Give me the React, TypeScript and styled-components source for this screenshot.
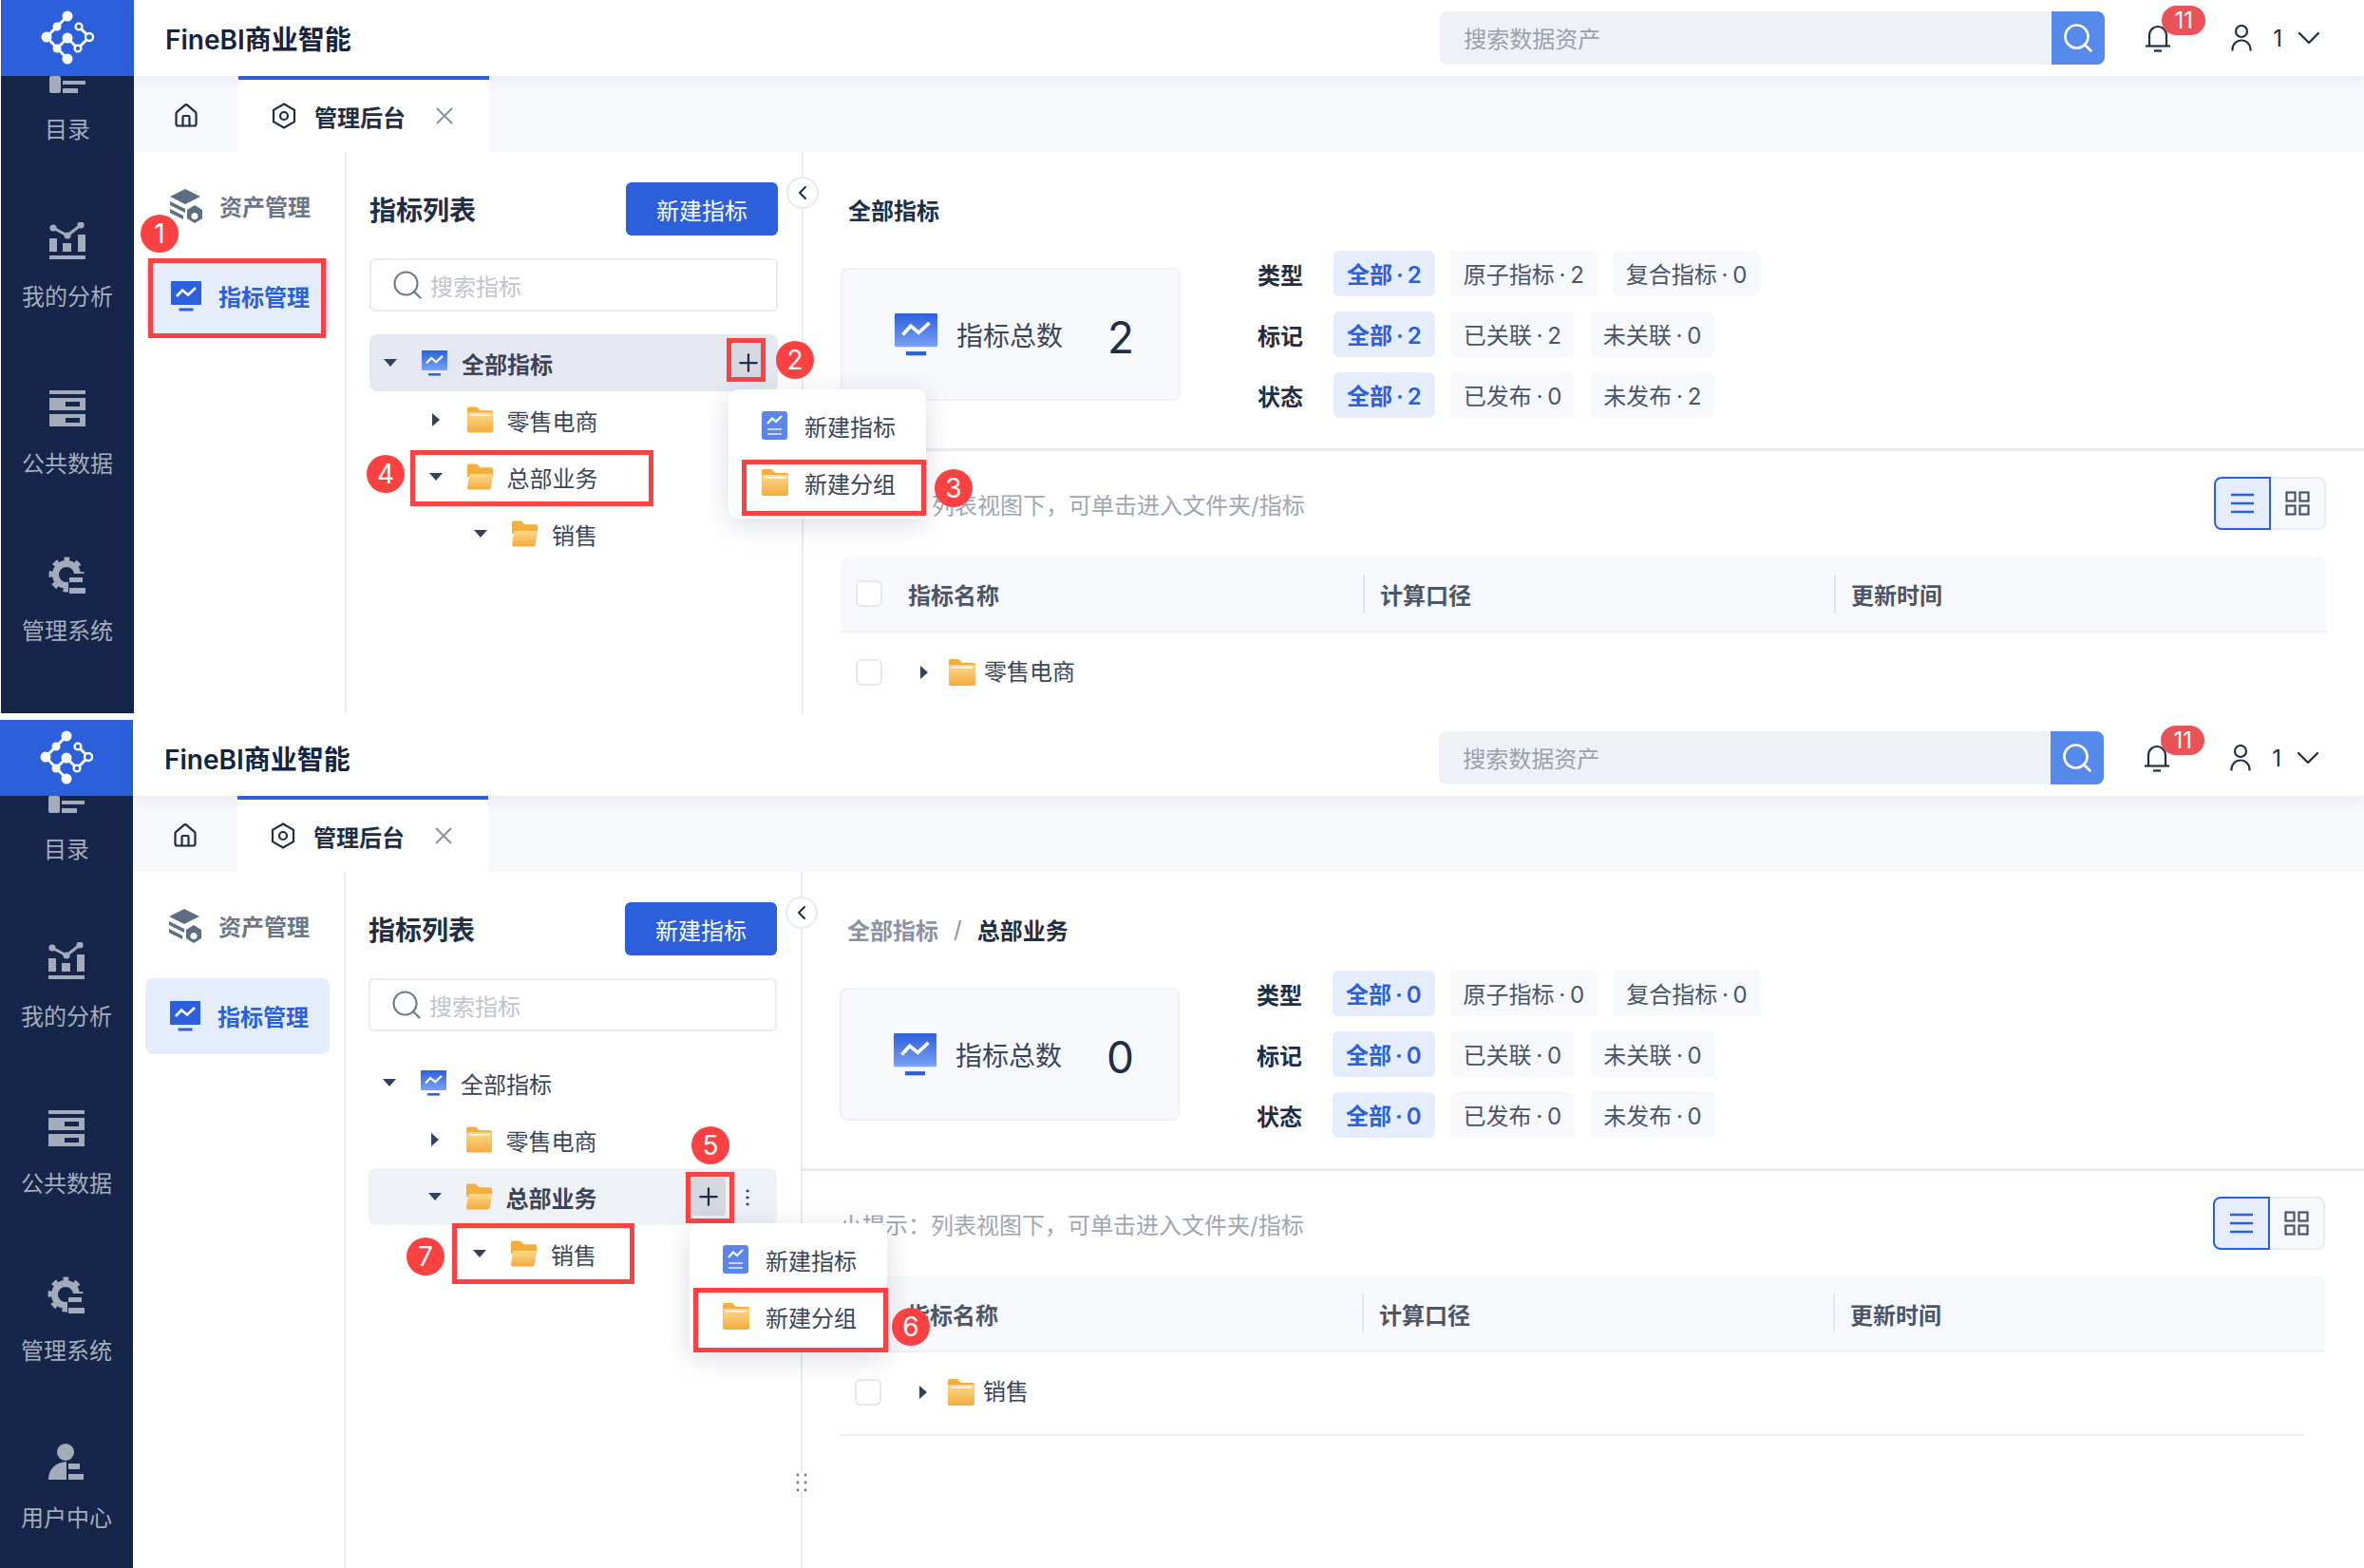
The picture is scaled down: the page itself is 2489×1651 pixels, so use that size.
import React from 'react';
import styled, { createGlobalStyle } from 'styled-components';
import { ChevronDown, ChevronLeft, House, Plus, Search, X } from 'lucide-react';

const GlobalStyle = createGlobalStyle`
    html, body {
        margin: 0;
        padding: 0;
        background: #ffffff;
        overflow-x: hidden;
    }
    body {
        font-family: "Inter", "Noto Sans CJK SC", sans-serif;
        color: #3a4559;
    }
    * {
        box-sizing: border-box;
    }
`;

type Count = { label: string; value: number };

interface NavEntry {
    label: string;
    icon: React.ReactNode;
}

interface Spot {
    x: number;
    y: number;
    w?: number;
    h?: number;
    n?: number;
}

interface FrameProps {
    height: number;
    shift?: boolean;
    allSelected?: boolean;
    crumb?: string;
    total: number;
    types: Count[];
    marks: Count[];
    states: Count[];
    rowName: string;
    popup: { x: number; y: number };
    boxes: Spot[];
    numbers: Spot[];
}

// icons
const LogoMark = () => (
    <svg width="60" height="60" viewBox="40 10 60 60" fill="none">
        <g stroke="#fff" strokeWidth="3">
            <path d="M70 17 48 39 70 62" />
            <path d="M59 51 70 40 81 51 93 39 82 28" />
        </g>
        <g fill="#fff">
            <circle cx="70" cy="17" r="5.5" />
            <circle cx="59" cy="28" r="4.5" />
            <circle cx="48" cy="39" r="5.5" />
            <circle cx="70" cy="40" r="5.5" />
            <circle cx="59" cy="51" r="4.5" />
            <circle cx="70" cy="62" r="5.5" />
        </g>
        <g fill="#2c5fdc" stroke="#fff" strokeWidth="2.4">
            <circle cx="82" cy="28" r="3.4" />
            <circle cx="93" cy="39" r="4" />
            <circle cx="81" cy="51" r="3.4" />
        </g>
    </svg>
);

const CatalogIcon = () => (
    <svg width="40" height="40" viewBox="0 0 40 40" fill="#a4acbc">
        <rect x="1" y="1" width="38" height="6" />
        <rect x="1" y="22" width="12" height="18" rx="2" />
        <rect x="15" y="27" width="24" height="4" />
        <rect x="15" y="35" width="16" height="5" />
    </svg>
);

const AnalysisIcon = () => (
    <svg width="40" height="40" viewBox="0 0 40 40" fill="#a4acbc">
        <rect x="1" y="35" width="38" height="4" />
        <rect x="1" y="17" width="8" height="14" />
        <rect x="15" y="22" width="9" height="9" />
        <rect x="31" y="13" width="8" height="18" />
        <path d="M5 6 20 14 34 3" fill="none" stroke="#a4acbc" strokeWidth="3" />
        <circle cx="5" cy="6" r="3.6" />
        <circle cx="20" cy="14" r="3.6" />
        <circle cx="34" cy="3" r="3.6" />
    </svg>
);

const DataIcon = () => (
    <svg width="40" height="40" viewBox="0 0 40 40" fill="#a4acbc">
        <rect x="1" y="1" width="38" height="4" />
        <path fillRule="evenodd" d="M1 9h38v13H1zM18 13v5h15v-5z" />
        <path fillRule="evenodd" d="M1 26h38v13H1zM18 30v5h15v-5z" />
    </svg>
);

const SettingIcon = () => (
    <svg width="40" height="40" viewBox="0 0 40 40" fill="none">
        <circle cx="19" cy="19" r="11.5" stroke="#a4acbc" strokeWidth="7" />
        <circle cx="19" cy="19" r="16.5" stroke="#a4acbc" strokeWidth="4" strokeDasharray="6.48 6.48" strokeDashoffset="3.24" transform="rotate(-90 19 19)" />
        <path d="M21 40V21h4v-3h15v22z" fill="#16264a" />
        <rect x="22" y="22" width="14" height="5" fill="#a4acbc" />
        <rect x="22" y="33" width="17" height="6" fill="#a4acbc" />
    </svg>
);

const PersonIcon = () => (
    <svg width="40" height="40" viewBox="0 0 40 40" fill="#a4acbc">
        <circle cx="19" cy="9" r="9" />
        <path d="M1 38c0-11 7-18 19-19v19z" />
        <rect x="22" y="21" width="12" height="6" />
        <rect x="22" y="32" width="16" height="6" />
    </svg>
);

const HexIcon = () => (
    <svg width="26" height="28" viewBox="0 0 26 28" fill="none" stroke="#1f2d45" strokeWidth="2.2">
        <path d="M13 1.5 24 7.8v12.4L13 26.5 2 20.2V7.8z" />
        <circle cx="13" cy="14" r="4" />
    </svg>
);

const AssetIcon = () => (
    <svg width="36" height="36" viewBox="0 0 36 36" fill="#5f6d82">
        <path d="M17 0 33 8 17 16 1 8z" />
        <path d="M1 13 17 21v4L1 17zM1 21l14 7v4L1 25z" />
        <path fillRule="evenodd" d="M27 17l8 5v9l-8 5-8-5v-9zm0 8a3.6 3.6 0 1 0 .01 0z" />
    </svg>
);

const MonitorIcon = ({ size = 32, flat = false }: { size?: number; flat?: boolean }) => (
    <svg width={size} height={size} viewBox="0 0 32 32">
        <defs>
            <linearGradient id="monitorFill" x1="0" y1="0" x2="0" y2="1">
                <stop offset="0" stopColor="#2c5fdc" />
                <stop offset="1" stopColor="#7ba2f5" />
            </linearGradient>
        </defs>
        <rect width="32" height="25" rx="1" fill={flat ? '#2c5fdc' : 'url(#monitorFill)'} />
        <path d="M6 16 12 9.5 18 14.5 26 7" fill="none" stroke="#fff" strokeWidth="2.6" />
        <rect x="8.5" y="28.5" width="15" height="3" fill="#2c5fdc" />
    </svg>
);

const DocIcon = () => (
    <svg width="27" height="30" viewBox="0 0 27 30">
        <rect width="27" height="30" rx="3" fill="#5b85e8" />
        <path d="M6 13 11 7.5 15 11 21 5" fill="none" stroke="#fff" strokeWidth="2.2" />
        <rect x="6" y="18" width="15" height="2" fill="#c7d6f8" />
        <rect x="6" y="23" width="15" height="2" fill="#c7d6f8" />
    </svg>
);

const FolderDefs = () => (
    <svg width="0" height="0" style={{ position: 'absolute' }}>
        <defs>
            <linearGradient id="folderFill" x1="0" y1="0" x2="0" y2="1">
                <stop offset="0" stopColor="#fdd98c" />
                <stop offset="1" stopColor="#f3aa3e" />
            </linearGradient>
        </defs>
    </svg>
);

const FolderIcon = ({ open = false }: { open?: boolean }) => (
    <svg width="28" height="28" viewBox="0 0 28 28">
        <path d="M2 0h8l4 4h12a2 2 0 0 1 2 2v8H0V2a2 2 0 0 1 2-2z" fill="#f5ad3c" />
        {open ? (
            <path d="M4 11h23a1 1 0 0 1 1 1l-2.4 14a2 2 0 0 1-2 2H2a2 2 0 0 1-2-2l2-13a2 2 0 0 1 2-2z" fill="url(#folderFill)" />
        ) : (
            <>
                <rect y="6" width="28" height="22" rx="2" fill="url(#folderFill)" />
                <rect x="3" y="8" width="22" height="1.4" fill="#fff" />
            </>
        )}
    </svg>
);

const Triangle = ({ open }: { open: boolean }) => (
    <svg width="16" height="16" viewBox="0 0 16 16" fill="#33415c">
        {open ? <path d="M1 4h14L8 12z" /> : <path d="M4 1v14l8-7z" />}
    </svg>
);

const BellIcon = () => (
    <svg width="28" height="30" viewBox="0 0 28 30" fill="none" stroke="#1f2d45" strokeWidth="2.2">
        <path d="M5 23V12a9 9 0 0 1 18 0v11" />
        <path d="M1 23.5h26" />
        <path d="M10 28.5h8" />
    </svg>
);

const UserIcon = () => (
    <svg width="24" height="28" viewBox="0 0 24 28" fill="none" stroke="#1f2d45" strokeWidth="2.2">
        <circle cx="12" cy="7" r="6" />
        <path d="M2.5 27.5V26a9.5 9.5 0 0 1 19 0v1.5" />
    </svg>
);

const ListIcon = () => (
    <svg width="26" height="24" viewBox="0 0 26 24" stroke="#2c5fdc" strokeWidth="2.4">
        <path d="M1 3h24M1 12h24M1 21h24" />
    </svg>
);

const GridIcon = () => (
    <svg width="26" height="26" viewBox="0 0 26 26" fill="none" stroke="#4a5468" strokeWidth="2.2">
        <rect x="1.5" y="1.5" width="9" height="9" />
        <rect x="15.5" y="1.5" width="9" height="9" />
        <rect x="1.5" y="15.5" width="9" height="9" />
        <rect x="15.5" y="15.5" width="9" height="9" />
    </svg>
);

const DragDots = () => (
    <svg width="12" height="20" viewBox="0 0 12 20" fill="#6b7688">
        {[2, 10, 18].map((y) => (
            <React.Fragment key={y}>
                <circle cx="2" cy={y} r="1.4" />
                <circle cx="10" cy={y} r="1.4" />
            </React.Fragment>
        ))}
    </svg>
);

const navItems: NavEntry[] = [
    { label: '目录', icon: <CatalogIcon /> },
    { label: '我的分析', icon: <AnalysisIcon /> },
    { label: '公共数据', icon: <DataIcon /> },
    { label: '管理系统', icon: <SettingIcon /> },
    { label: '用户中心', icon: <PersonIcon /> },
];

function FilterLine({ title, items }: { title: string; items: Count[] }) {
    return (
        <FilterRow>
            <FilterTitle>{title}</FilterTitle>
            {items.map((item, i) => (
                <Chip key={item.label} $active={i === 0}>
                    {item.label} · {item.value}
                </Chip>
            ))}
        </FilterRow>
    );
}

function ScreenFrame(props: FrameProps) {
    const { allSelected, crumb, total, types, marks, states, rowName, popup, boxes, numbers } = props;

    return (
        <Frame $height={props.height} $shift={props.shift}>
            <SideBar>
                <LogoBox>
                    <LogoMark />
                </LogoBox>
                <NavList>
                    {navItems.map((item) => (
                        <NavItem key={item.label}>
                            {item.icon}
                            <span>{item.label}</span>
                        </NavItem>
                    ))}
                </NavList>
            </SideBar>

            <MainArea>
                <TopBar>
                    <AppTitle>FineBI商业智能</AppTitle>
                    <SearchBox>
                        <SearchText>搜索数据资产</SearchText>
                        <SearchBtn>
                            <Search size={36} strokeWidth={1.8} />
                        </SearchBtn>
                    </SearchBox>
                    <BellBox>
                        <BellIcon />
                        <BellCount>11</BellCount>
                    </BellBox>
                    <UserBox>
                        <UserIcon />
                        <span>1</span>
                        <ChevronDown size={40} strokeWidth={1.4} color="#1f2d45" />
                    </UserBox>
                </TopBar>

                <TabBar>
                    <HomeTab>
                        <House size={28} strokeWidth={1.9} color="#1f2d45" />
                    </HomeTab>
                    <ActiveTab>
                        <HexIcon />
                        <TabLabel>管理后台</TabLabel>
                        <X size={30} strokeWidth={1.6} color="#8a93a3" />
                    </ActiveTab>
                </TabBar>

                <Body>
                    <MenuColumn>
                        <MenuItem>
                            <AssetIcon />
                            <span>资产管理</span>
                        </MenuItem>
                        <MenuItem $active>
                            <MonitorIcon flat />
                            <span>指标管理</span>
                        </MenuItem>
                    </MenuColumn>

                    <TreeColumn>
                        <TreeHead>
                            <TreeTitle>指标列表</TreeTitle>
                            <PrimaryBtn>新建指标</PrimaryBtn>
                        </TreeHead>
                        <TreeSearch>
                            <Search size={36} strokeWidth={1.4} color="#6b7688" />
                            <span>搜索指标</span>
                        </TreeSearch>
                        <TreeList>
                            <TreeRow $level={0} $tone={allSelected ? 'strong' : undefined}>
                                <Triangle open />
                                <TreeIcon><MonitorIcon size={27} /></TreeIcon>
                                <TreeText $bold={allSelected}>全部指标</TreeText>
                                {allSelected && <PlusBtn><Plus size={30} strokeWidth={1.8} color="#1f2d45" /></PlusBtn>}
                            </TreeRow>
                            <TreeRow $level={1}>
                                <Triangle open={false} />
                                <TreeIcon><FolderIcon /></TreeIcon>
                                <TreeText>零售电商</TreeText>
                            </TreeRow>
                            <TreeRow $level={1} $tone={allSelected ? undefined : 'soft'}>
                                <Triangle open />
                                <TreeIcon><FolderIcon open /></TreeIcon>
                                <TreeText $bold={!allSelected}>总部业务</TreeText>
                                {!allSelected && (
                                    <>
                                        <PlusBtn><Plus size={30} strokeWidth={1.8} color="#1f2d45" /></PlusBtn>
                                        <Kebab>⋮</Kebab>
                                    </>
                                )}
                            </TreeRow>
                            <TreeRow $level={2}>
                                <Triangle open />
                                <TreeIcon><FolderIcon open /></TreeIcon>
                                <TreeText>销售</TreeText>
                            </TreeRow>
                        </TreeList>
                        <CollapseBtn>
                            <ChevronLeft size={24} strokeWidth={2} color="#1f2d45" />
                        </CollapseBtn>
                        <DragHandle>
                            <DragDots />
                        </DragHandle>
                    </TreeColumn>

                    <DetailColumn>
                        <Summary>
                            <Crumbs>
                                {crumb ? (
                                    <>
                                        <CrumbParent>全部指标</CrumbParent>
                                        <CrumbSlash>/</CrumbSlash>
                                        <span>{crumb}</span>
                                    </>
                                ) : (
                                    <span>全部指标</span>
                                )}
                            </Crumbs>
                            <SummaryRow>
                                <StatCard>
                                    <MonitorIcon size={45} />
                                    <StatLabel>指标总数</StatLabel>
                                    <StatValue>{total}</StatValue>
                                </StatCard>
                                <Filters>
                                    <FilterLine title="类型" items={types} />
                                    <FilterLine title="标记" items={marks} />
                                    <FilterLine title="状态" items={states} />
                                </Filters>
                            </SummaryRow>
                        </Summary>

                        <ListArea>
                            <HintRow>
                                <HintText>小提示：列表视图下，可单击进入文件夹/指标</HintText>
                                <ViewSwitch>
                                    <ViewBtn $active><ListIcon /></ViewBtn>
                                    <ViewBtn><GridIcon /></ViewBtn>
                                </ViewSwitch>
                            </HintRow>
                            <TableHead>
                                <HeadCell>
                                    <CheckBox />
                                    <span>指标名称</span>
                                </HeadCell>
                                <HeadCell $line>计算口径</HeadCell>
                                <HeadCell $line>更新时间</HeadCell>
                            </TableHead>
                            <TableRow>
                                <CheckBox />
                                <RowCaret><Triangle open={false} /></RowCaret>
                                <FolderIcon />
                                <span>{rowName}</span>
                            </TableRow>
                        </ListArea>
                    </DetailColumn>
                </Body>
            </MainArea>

            <Popup $x={popup.x} $y={popup.y}>
                <PopupItem>
                    <DocIcon />
                    <span>新建指标</span>
                </PopupItem>
                <PopupItem>
                    <FolderIcon />
                    <span>新建分组</span>
                </PopupItem>
            </Popup>

            {boxes.map((box) => (
                <RedBox key={`${box.x}-${box.y}`} $x={box.x} $y={box.y} $w={box.w} $h={box.h} />
            ))}
            {numbers.map((num) => (
                <RedNumber key={num.n} $x={num.x} $y={num.y}>{num.n}</RedNumber>
            ))}
        </Frame>
    );
}

function App() {
    return (
        <Page>
            <GlobalStyle />
            <FolderDefs />
            <ScreenFrame
                height={751}
                shift
                allSelected
                total={2}
                types={[{ label: '全部', value: 2 }, { label: '原子指标', value: 2 }, { label: '复合指标', value: 0 }]}
                marks={[{ label: '全部', value: 2 }, { label: '已关联', value: 2 }, { label: '未关联', value: 0 }]}
                states={[{ label: '全部', value: 2 }, { label: '已发布', value: 0 }, { label: '未发布', value: 2 }]}
                rowName="零售电商"
                popup={{ x: 766, y: 410 }}
                boxes={[
                    { x: 155, y: 272, w: 187, h: 84 },
                    { x: 764, y: 356, w: 41, h: 46 },
                    { x: 431, y: 474, w: 256, h: 59 },
                    { x: 780, y: 484, w: 194, h: 59 },
                ]}
                numbers={[
                    { x: 167, y: 246, n: 1 },
                    { x: 836, y: 379, n: 2 },
                    { x: 1003, y: 514, n: 3 },
                    { x: 405, y: 499, n: 4 },
                ]}
            />
            <ScreenFrame
                height={893}
                crumb="总部业务"
                total={0}
                types={[{ label: '全部', value: 0 }, { label: '原子指标', value: 0 }, { label: '复合指标', value: 0 }]}
                marks={[{ label: '全部', value: 0 }, { label: '已关联', value: 0 }, { label: '未关联', value: 0 }]}
                states={[{ label: '全部', value: 0 }, { label: '已发布', value: 0 }, { label: '未发布', value: 0 }]}
                rowName="销售"
                popup={{ x: 726, y: 530 }}
                boxes={[
                    { x: 722, y: 476, w: 51, h: 54 },
                    { x: 730, y: 598, w: 205, h: 68 },
                    { x: 476, y: 530, w: 192, h: 64 },
                ]}
                numbers={[
                    { x: 748, y: 448, n: 5 },
                    { x: 959, y: 639, n: 6 },
                    { x: 448, y: 565, n: 7 },
                ]}
            />
        </Page>
    );
}

const Page = styled.div`
    display: flex;
    flex-direction: column;
    row-gap: 7px;
    width: 2489px;
`;

// frame
const Frame = styled.section<{ $height: number; $shift?: boolean }>`
    position: relative;
    display: flex;
    flex-shrink: 0;
    width: 2489px;
    height: ${(p) => p.$height}px;
    margin-left: ${(p) => (p.$shift ? '1px' : '0')};
    overflow: hidden;
    background: #ffffff;
`;

const SideBar = styled.aside`
    flex: 0 0 140px;
    background: #16264a;
    overflow: hidden;
`;

const LogoBox = styled.div`
    position: relative;
    z-index: 1;
    display: flex;
    align-items: center;
    justify-content: center;
    height: 80px;
    background: #2c5fdc;
`;

const NavList = styled.nav`
    display: flex;
    flex-direction: column;
    margin-top: -62px;
`;

const NavItem = styled.div`
    display: flex;
    flex-direction: column;
    align-items: center;
    justify-content: center;
    row-gap: 22px;
    height: 176px;
    flex-shrink: 0;
    font-size: 24px;
    line-height: 34px;
    color: #a5adbd;
`;

const MainArea = styled.div`
    flex: 1;
    display: flex;
    flex-direction: column;
    min-width: 0;
`;

// top bar
const TopBar = styled.header`
    position: relative;
    z-index: 1;
    display: flex;
    align-items: center;
    flex: 0 0 80px;
    padding: 0 0 0 33px;
    background: #ffffff;
    box-shadow: 0 4px 14px rgba(40, 50, 80, 0.07);
`;

const AppTitle = styled.div`
    font-size: 28px;
    font-weight: 600;
    color: #14233f;
    margin-right: auto;
`;

const SearchBox = styled.div`
    display: flex;
    width: 700px;
    height: 56px;
    border-radius: 8px;
    overflow: hidden;
    background: #eef1f6;
`;

const SearchText = styled.div`
    flex: 1;
    padding-left: 25px;
    font-size: 24px;
    line-height: 60px;
    color: #9aa1ad;
`;

const SearchBtn = styled.div`
    display: flex;
    align-items: center;
    justify-content: center;
    width: 56px;
    color: #ffffff;
    background: #5589ea;
`;

const BellBox = styled.div`
    position: relative;
    display: flex;
    margin-left: 42px;
    width: 28px;
    height: 30px;
`;

const BellCount = styled.span`
    position: absolute;
    left: 18px;
    top: -19px;
    width: 46px;
    height: 31px;
    border-radius: 16px;
    background: #e95357;
    color: #ffffff;
    font-size: 24px;
    line-height: 31px;
    text-align: center;
`;

const UserBox = styled.div`
    display: flex;
    align-items: center;
    margin-left: 62px;
    margin-right: 39px;
    font-size: 24px;
    color: #1f2d45;

    & span {
        margin: 0 8px 0 21px;
    }
`;

// tabs
const TabBar = styled.div`
    display: flex;
    flex: 0 0 80px;
    background: #f7f8fc;
`;

const HomeTab = styled.div`
    display: flex;
    align-items: center;
    justify-content: center;
    width: 110px;
    padding-top: 3px;
`;

const ActiveTab = styled.div`
    position: relative;
    z-index: 2;
    display: flex;
    align-items: center;
    width: 264px;
    padding-left: 35px;
    border-top: 4px solid #2c5fdc;
    background: #ffffff;
`;

const TabLabel = styled.span`
    margin: 0 26px 0 19px;
    font-size: 24px;
    font-weight: 600;
    color: #1f2d45;
`;

// body
const Body = styled.div`
    flex: 1;
    display: flex;
    min-height: 0;
`;

const MenuColumn = styled.div`
    display: flex;
    flex-direction: column;
    row-gap: 15px;
    flex: 0 0 224px;
    padding: 17px 0 0 13px;
    border-right: 2px solid #e8ebf2;
`;

const MenuItem = styled.div<{ $active?: boolean }>`
    display: flex;
    align-items: center;
    column-gap: ${(p) => (p.$active ? '18px' : '17px')};
    width: 194px;
    height: 80px;
    padding-left: ${(p) => (p.$active ? '26px' : '24px')};
    border-radius: 8px;
    font-size: 24px;
    font-weight: 600;
    color: ${(p) => (p.$active ? '#2c5fdc' : '#6b7688')};
    background: ${(p) => (p.$active ? '#e5edfd' : 'transparent')};

    & span {
        margin-top: -2px;
    }
`;

const TreeColumn = styled.div`
    position: relative;
    flex: 0 0 481px;
    padding: 32px 25px 0 24px;
    border-right: 2px solid #e8ebf2;
`;

const TreeHead = styled.div`
    display: flex;
    align-items: center;
    justify-content: space-between;
    height: 56px;
`;

const TreeTitle = styled.h2`
    margin: 0;
    font-size: 28px;
    font-weight: 700;
    color: #1f2d45;
`;

const PrimaryBtn = styled.button`
    width: 160px;
    height: 56px;
    padding: 0;
    border: 0;
    border-radius: 6px;
    background: #2c5fdc;
    color: #ffffff;
    font-family: inherit;
    font-size: 24px;
`;

const TreeSearch = styled.div`
    display: flex;
    align-items: center;
    column-gap: 6px;
    height: 56px;
    margin-top: 24px;
    padding-left: 20px;
    border: 2px solid #e8ebf2;
    border-radius: 6px;
    font-size: 24px;
    color: #c0c4cc;
`;

const TreeList = styled.div`
    margin-top: 24px;
`;

const TreeRow = styled.div<{ $level: number; $tone?: 'strong' | 'soft' }>`
    display: flex;
    align-items: center;
    height: 60px;
    padding-left: ${(p) => 14 + p.$level * 47.5}px;
    padding-right: 13px;
    border-radius: 8px;
    background: ${(p) => (p.$tone === 'strong' ? '#e5e8f0' : p.$tone === 'soft' ? '#eef1f6' : 'transparent')};
`;

const TreeIcon = styled.span`
    display: flex;
    width: 27px;
    margin: 0 15px 0 25px;
`;

const TreeText = styled.span<{ $bold?: boolean }>`
    font-size: 24px;
    font-weight: ${(p) => (p.$bold ? 600 : 400)};
    color: #3a4559;
    margin-right: auto;
`;

const PlusBtn = styled.span`
    display: flex;
    align-items: center;
    justify-content: center;
    width: 36px;
    height: 40px;
    border-radius: 4px;
    background: #d4d8e0;
`;

const Kebab = styled.span`
    width: 41px;
    padding-left: 5px;
    font-size: 20px;
    font-weight: 700;
    text-align: center;
    color: #33415c;
`;

const CollapseBtn = styled.div`
    position: absolute;
    z-index: 2;
    right: -18px;
    top: 26px;
    display: flex;
    align-items: center;
    justify-content: center;
    width: 34px;
    height: 34px;
    border-radius: 50%;
    border: 2px solid #e8ebf2;
    background: #ffffff;
`;

const DragHandle = styled.div`
    position: absolute;
    z-index: 2;
    right: -7px;
    top: 633px;
    display: flex;
    padding: 0;
    background: #ffffff;
`;

const DetailColumn = styled.div`
    flex: 1;
    display: flex;
    flex-direction: column;
    min-width: 0;
`;

const Summary = styled.div`
    padding: 32px 41px 32px 39px;
    border-bottom: 3px solid #e8ebf2;
`;

const Crumbs = styled.div`
    display: flex;
    align-items: center;
    height: 56px;
    margin-bottom: 16px;
    padding-left: 8px;
    font-size: 24px;
    font-weight: 600;
    color: #1f2d45;
`;

const CrumbParent = styled.span`
    color: #8a93a3;
`;

const CrumbSlash = styled.span`
    margin: 0 16px;
    font-weight: 400;
    color: #8a93a3;
`;

const SummaryRow = styled.div`
    display: flex;
    align-items: center;
    column-gap: 81px;
`;

const StatCard = styled.div`
    display: flex;
    align-items: center;
    width: 358px;
    height: 140px;
    padding-left: 55px;
    border: 2px solid #eef0f5;
    border-radius: 8px;
    background: #f7f8fc;
`;

const StatLabel = styled.span`
    margin: 0 47px 0 20px;
    font-size: 28px;
    color: #3a4559;
`;

const StatValue = styled.span`
    padding-top: 5px;
    font-size: 46px;
    font-weight: 400;
    color: #1f2d45;
`;

const Filters = styled.div`
    display: flex;
    flex-direction: column;
    row-gap: 16px;
`;

const FilterRow = styled.div`
    display: flex;
    align-items: center;
    column-gap: 16px;
`;

const FilterTitle = styled.span`
    width: 64px;
    font-size: 24px;
    font-weight: 700;
    color: #1f2d45;
`;

const Chip = styled.span<{ $active?: boolean }>`
    height: 48px;
    padding: 0 14px;
    border-radius: 6px;
    font-size: 24px;
    line-height: 51px;
    word-spacing: -2px;
    font-weight: ${(p) => (p.$active ? 600 : 400)};
    color: ${(p) => (p.$active ? '#2c5fdc' : '#4a5468')};
    background: ${(p) => (p.$active ? '#e5edfd' : '#f7f8fc')};
`;

const ListArea = styled.div`
    padding: 27px 41px 0 39px;
`;

const HintRow = styled.div`
    display: flex;
    align-items: center;
    justify-content: space-between;
    height: 56px;
    margin-bottom: 28px;
`;

const HintText = styled.span`
    font-size: 24px;
    color: #a0a6b2;
`;

const ViewSwitch = styled.div`
    display: flex;
`;

const ViewBtn = styled.div<{ $active?: boolean }>`
    display: flex;
    align-items: center;
    justify-content: center;
    width: ${(p) => (p.$active ? '60px' : '58px')};
    height: 56px;
    border: 2px solid ${(p) => (p.$active ? '#2c5fdc' : '#e8ebf2')};
    border-left-width: ${(p) => (p.$active ? '2px' : '0')};
    border-radius: ${(p) => (p.$active ? '8px 0 0 8px' : '0 8px 8px 0')};
    background: ${(p) => (p.$active ? '#e5edfd' : '#f7f8fc')};
`;

const TableHead = styled.div`
    display: grid;
    grid-template-columns: 550px 496px 1fr;
    align-items: center;
    height: 80px;
    border-bottom: 2px solid #eef0f5;
    border-radius: 8px 8px 0 0;
    background: #f7f8fc;
`;

const HeadCell = styled.div<{ $line?: boolean }>`
    display: flex;
    align-items: center;
    column-gap: 27px;
    height: 40px;
    padding-left: 16px;
    border-left: ${(p) => (p.$line ? '2px solid #e0e3ea' : '0')};
    font-size: 24px;
    font-weight: 600;
    color: #4d5666;
`;

const CheckBox = styled.span`
    flex: 0 0 28px;
    width: 28px;
    height: 28px;
    border: 2px solid #e5e8ef;
    border-radius: 6px;
    background: #ffffff;
`;

const TableRow = styled.div`
    display: flex;
    align-items: center;
    width: 1543px;
    height: 88px;
    padding: 0 0 2px 16px;
    border-bottom: 2px solid #eef0f5;
    font-size: 24px;
    color: #3a4559;

    & span:last-child {
        margin: -5px 0 0 9px;
    }
`;

const RowCaret = styled.span`
    display: flex;
    margin: 0 18px 0 36px;
`;

// overlays
const Popup = styled.div<{ $x: number; $y: number }>`
    position: absolute;
    z-index: 3;
    left: ${(p) => p.$x}px;
    top: ${(p) => p.$y}px;
    width: 208px;
    height: 136px;
    padding: 8px 0;
    border-radius: 10px;
    background: #ffffff;
    box-shadow: 0 6px 28px rgba(30, 40, 70, 0.16);
`;

const PopupItem = styled.div`
    display: flex;
    align-items: center;
    column-gap: 18px;
    height: 60px;
    padding-left: 35px;
    font-size: 24px;
    color: #3a4559;

    & + & {
        column-gap: 17px;
    }
`;

const RedBox = styled.div<{ $x: number; $y: number; $w?: number; $h?: number }>`
    position: absolute;
    z-index: 4;
    left: ${(p) => p.$x}px;
    top: ${(p) => p.$y}px;
    width: ${(p) => p.$w}px;
    height: ${(p) => p.$h}px;
    border: 5px solid #fb4141;
`;

const RedNumber = styled.div<{ $x: number; $y: number }>`
    position: absolute;
    z-index: 5;
    left: ${(p) => p.$x - 20}px;
    top: ${(p) => p.$y - 20}px;
    width: 40px;
    height: 40px;
    border-radius: 50%;
    background: #fb4141;
    color: #ffffff;
    font-size: 28px;
    line-height: 40px;
    text-align: center;
`;

export default App;
